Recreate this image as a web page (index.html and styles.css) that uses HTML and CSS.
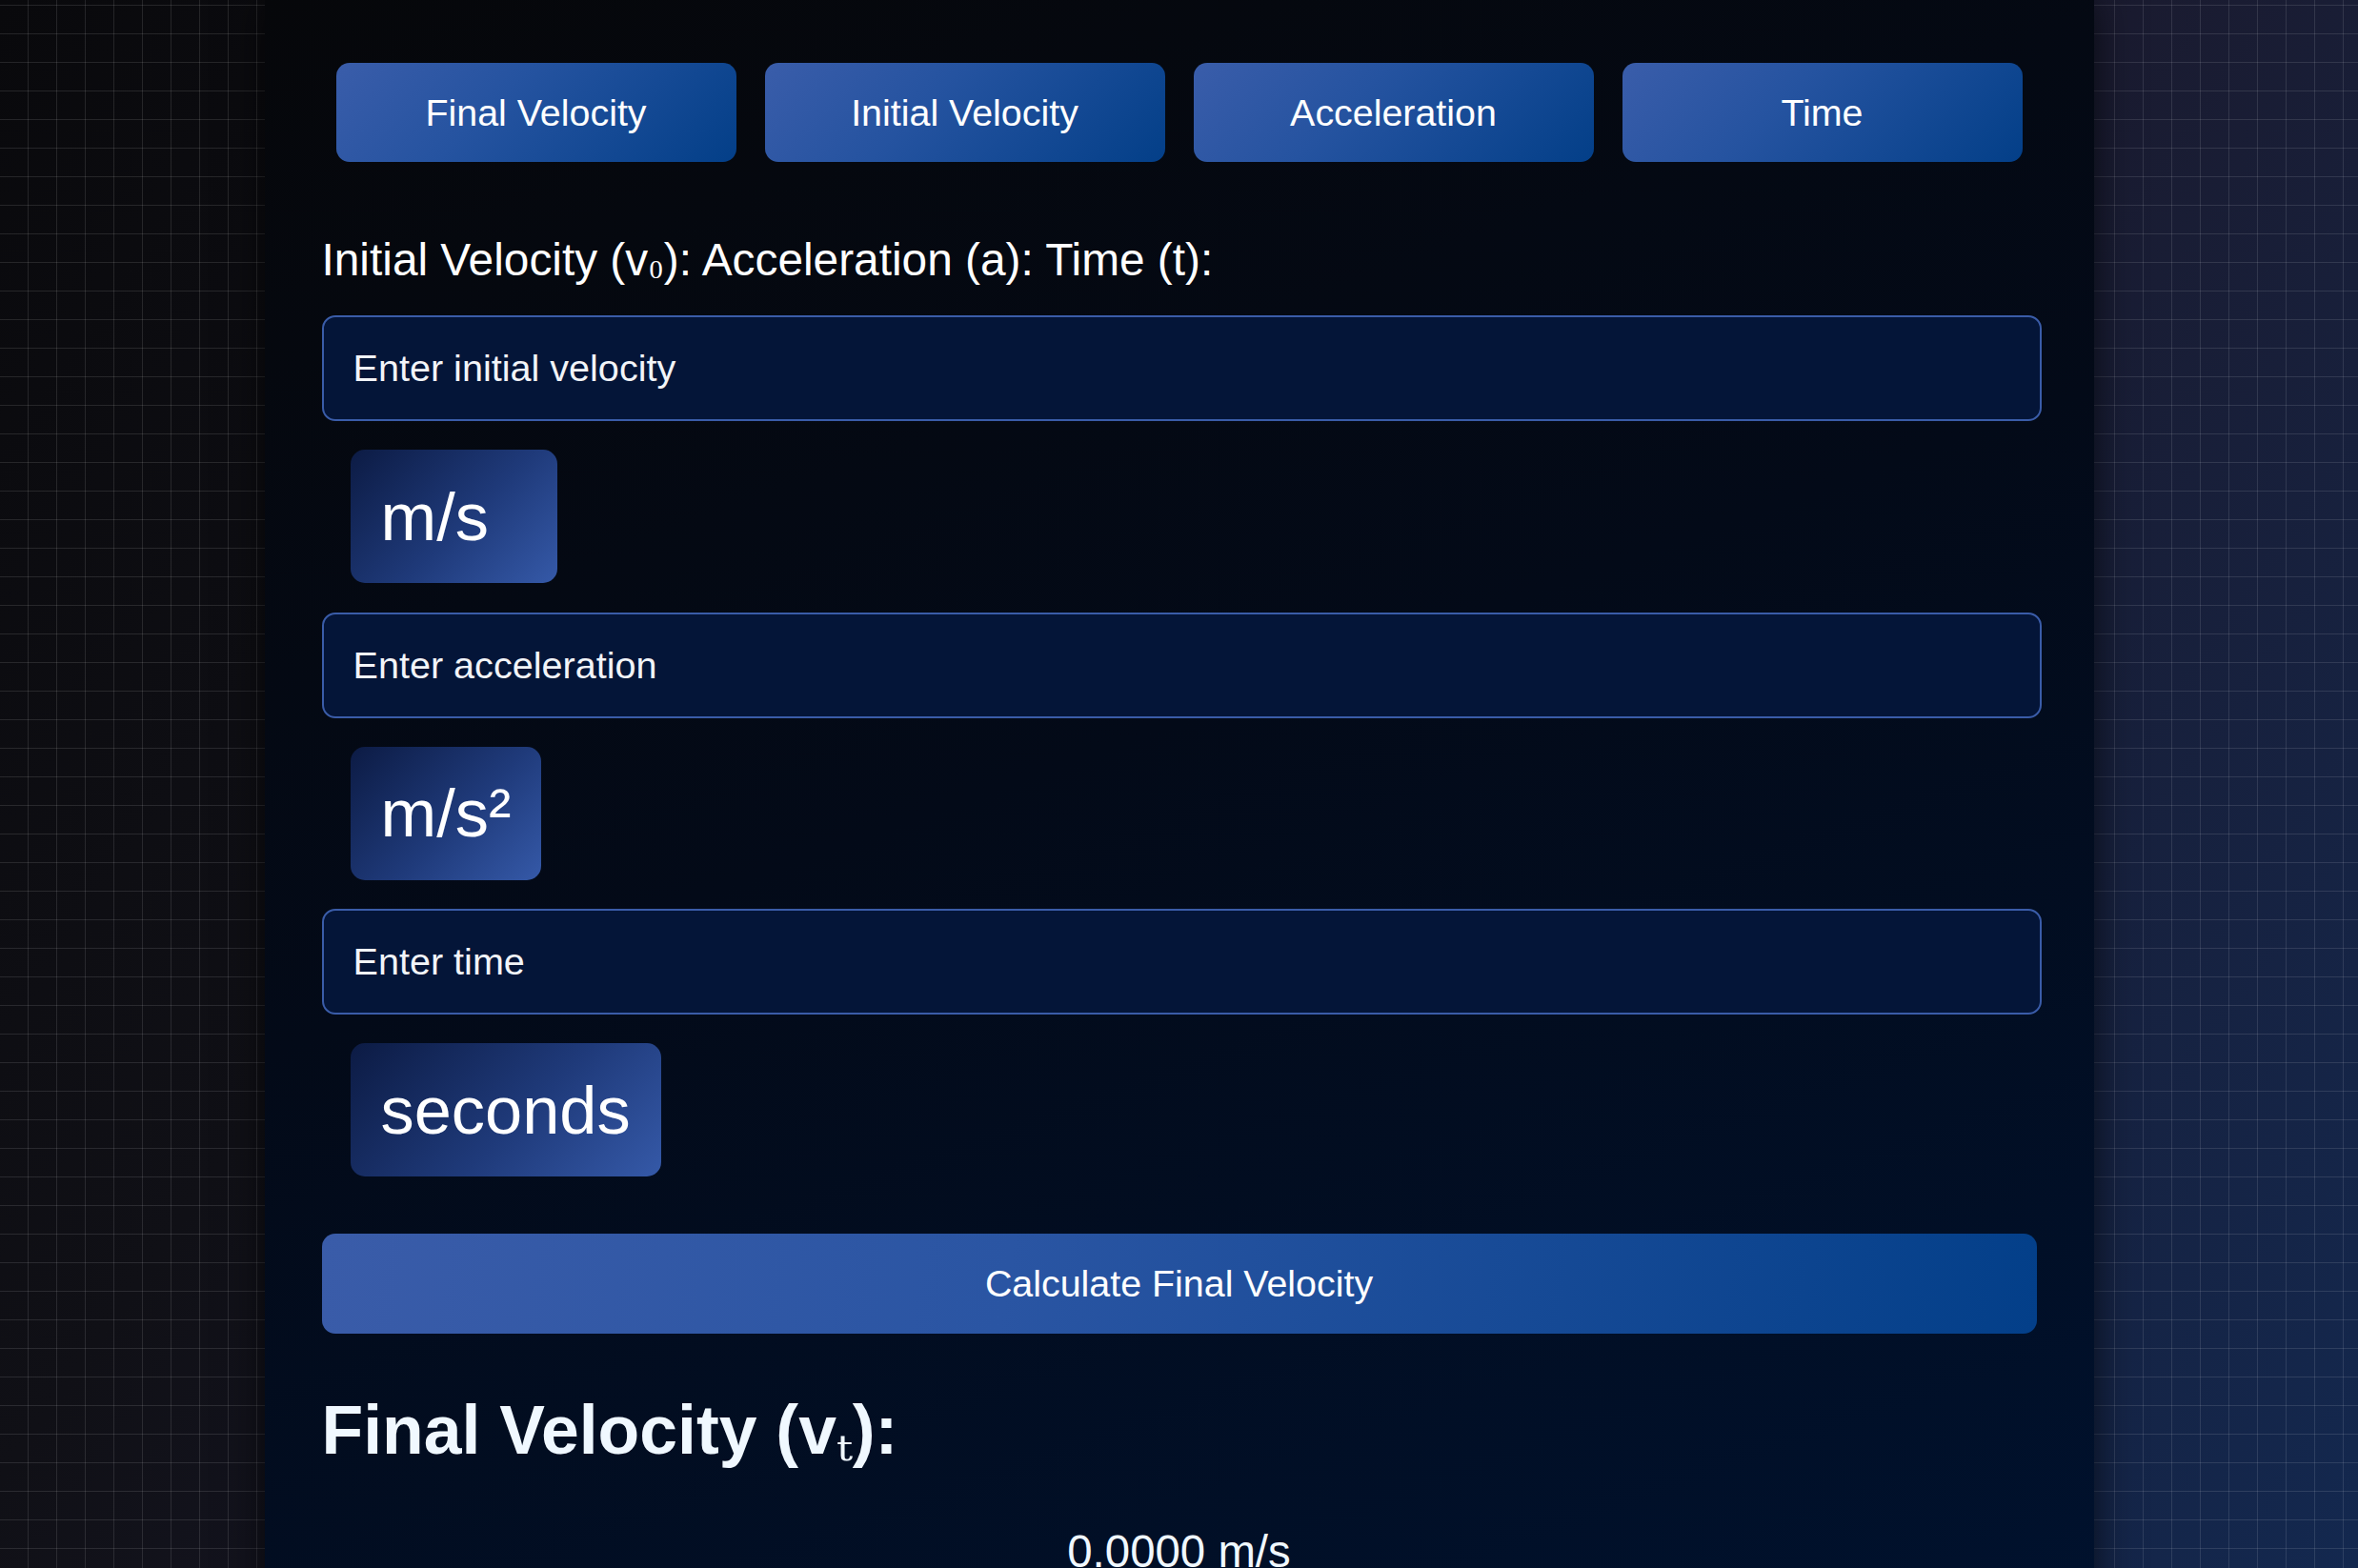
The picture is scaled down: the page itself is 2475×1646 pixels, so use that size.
FILE: index.html
```html
<!DOCTYPE html>
<html lang="en">
<head>
<meta charset="utf-8">
<title>Final Velocity Calculator</title>
<link rel="stylesheet" href="styles.css">
</head>
<body>
<div class="page">
  <main class="container">
    <nav class="tabs">
      <button class="tab">Final Velocity</button>
      <button class="tab">Initial Velocity</button>
      <button class="tab">Acceleration</button>
      <button class="tab">Time</button>
    </nav>

    <div class="labels">
      <label>Initial Velocity (v<span class="sub">₀</span>):</label>
      <label>Acceleration (a):</label>
      <label>Time (t):</label>
    </div>

    <input class="field" type="text" placeholder="Enter initial velocity">
    <div class="unit unit-velocity">m/s</div>

    <input class="field" type="text" placeholder="Enter acceleration">
    <div class="unit">m/s²</div>

    <input class="field" type="text" placeholder="Enter time">
    <div class="unit">seconds</div>

    <button class="calc">Calculate Final Velocity</button>

    <h2 class="result-title">Final Velocity (v<span class="sub-t">ₜ</span>):</h2>
    <div class="result">0.0000 m/s</div>
  </main>
</div>
</body>
</html>
```

FILE: styles.css
```css
html, body {
  margin: 0;
  padding: 0;
  height: 100%;
  overflow: hidden;
}

body {
  font-family: "Liberation Sans", Arial, sans-serif;
  color: #ffffff;
  background-color: #0a0a0e;
}

.page {
  height: 100vh;
  overflow: hidden;
  background-image:
    linear-gradient(rgba(255, 255, 255, 0.11) 1px, transparent 1px),
    linear-gradient(90deg, rgba(255, 255, 255, 0.11) 1px, transparent 1px),
    linear-gradient(125deg, #09090c 0%, #101016 30%, #1a1b30 62%, #13284f 100%);
  background-size: 30px 30px, 30px 30px, 100% 100%;
  background-position: 0 5px, -1px 0, 0 0;
}

.container {
  width: 1920px;
  box-sizing: border-box;
  margin: 0 auto;
  padding: 66px 60px 60px;
  background: linear-gradient(160deg, #06070a 0%, #030a18 45%, #00122f 100%);
  box-shadow: 0 0 40px rgba(0, 0, 0, 0.65);
  min-height: 1760px;
}

.tabs {
  display: flex;
}

.tab {
  flex: 1;
  margin: 0 15px;
  height: 104px;
  border: none;
  border-radius: 14px;
  background: linear-gradient(135deg, #3a5daa 0%, #2553a0 40%, #033f88 100%);
  color: #ffffff;
  font-family: "Liberation Sans", Arial, sans-serif;
  font-size: 39.4px;
  cursor: pointer;
}

.labels {
  margin-top: 76px;
  height: 54.5px;
  font-size: 47.8px;
  line-height: 54.5px;
  color: #ffffff;
}

.sub {
  font-family: "Liberation Serif", "DejaVu Serif", serif;
  font-size: 1em;
  line-height: 0;
  vertical-align: 0.12em;
}

.sub-t {
  font-family: "Liberation Serif", "DejaVu Serif", serif;
  font-weight: normal;
  font-size: 0.95em;
  line-height: 0;
  vertical-align: -0.1em;
}

.field {
  display: block;
  box-sizing: border-box;
  width: 1805px;
  height: 111px;
  margin: 30.5px 0 0;
  padding: 0 31px;
  border: 2.5px solid #3a5ca8;
  border-radius: 14px;
  background: #041538;
  color: #ffffff;
  font-family: "Liberation Sans", Arial, sans-serif;
  font-size: 39.6px;
  outline: none;
}

.field::placeholder {
  color: #f2f4f8;
  opacity: 1;
}

.unit {
  display: flex;
  align-items: center;
  width: max-content;
  box-sizing: border-box;
  height: 140px;
  margin: 30px 0 0 30px;
  padding: 0 32px;
  border-radius: 15px;
  background: linear-gradient(135deg, #0c1b44 0%, #1f3a7a 55%, #3559a8 100%);
  font-size: 70.4px;
  color: #ffffff;
}

.unit-velocity {
  min-width: 217px;
}

.calc {
  display: block;
  width: 100%;
  height: 105px;
  margin-top: 60px;
  border: none;
  border-radius: 14px;
  background: linear-gradient(100deg, #3a5ca9 0%, #2a55a3 40%, #033f89 100%);
  color: #ffffff;
  font-family: "Liberation Sans", Arial, sans-serif;
  font-size: 39.4px;
  cursor: pointer;
}

.result-title {
  margin: 60.5px 0 0;
  height: 81px;
  font-size: 71.5px;
  line-height: 81px;
  font-weight: bold;
  color: #f0f8ff;
}

.result {
  margin-top: 60px;
  text-align: center;
  font-size: 47.4px;
  line-height: 54.5px;
  color: #f0f8ff;
}
```
